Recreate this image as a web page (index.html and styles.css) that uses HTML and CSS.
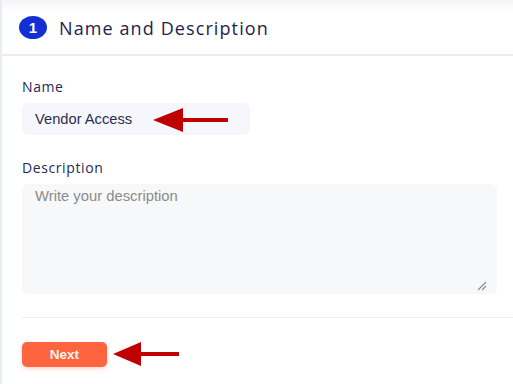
FILE: index.html
```html
<!DOCTYPE html>
<html>
<head>
<meta charset="utf-8">
<link rel="stylesheet" href="styles.css">
</head>
<body>
<div class="card">
  <div class="header">
    <span class="step">1</span>
    <span class="title">Name and Description</span>
  </div>
  <div class="content">
    <div class="field">
      <label class="label">Name</label>
      <div class="name-row">
        <div class="input">Vendor Access</div>
        <svg class="arrow arrow-name" width="80" height="26" viewBox="0 0 80 26">
          <polygon points="0,12 30,0 30,24" fill="#c00000"/>
          <rect x="28" y="10" width="47" height="4" fill="#c00000"/>
        </svg>
      </div>
    </div>
    <div class="field field-desc">
      <label class="label">Description</label>
      <div class="textarea">
        <span class="placeholder">Write your description</span>
        <svg class="grip" width="10" height="10" viewBox="0 0 10 10">
          <line x1="1" y1="9" x2="9" y2="1" stroke="#8a8a8a" stroke-width="1.1"/>
          <line x1="5" y1="9" x2="9" y2="5" stroke="#8a8a8a" stroke-width="1.1"/>
        </svg>
      </div>
    </div>
    <div class="divider"></div>
    <div class="actions">
      <button class="next">Next</button>
      <svg class="arrow arrow-next" width="70" height="26" viewBox="0 0 70 26">
        <polygon points="0,12 28,0 28,24" fill="#c00000"/>
        <rect x="26" y="10" width="40" height="4" fill="#c00000"/>
      </svg>
    </div>
  </div>
</div>
</body>
</html>
```
FILE: styles.css
```css
* { box-sizing: border-box; }
html, body { margin: 0; padding: 0; background: #ffffff; }
body { width: 513px; height: 384px; overflow: hidden; }

.card {
  height: 384px;
  border-left: 2px solid #e8ecf3;
  background: linear-gradient(to bottom, #f3f4f7 0px, #ffffff 12px);
}

.header {
  height: 56px;
  display: flex;
  align-items: center;
  padding-left: 17px;
  gap: 12px;
  border-bottom: 2px solid #e9ecf3;
}

.step {
  width: 28px;
  height: 23px;
  border-radius: 50%;
  background: #1330d6;
  color: #ffffff;
  font-family: "Liberation Sans", Arial, sans-serif;
  font-weight: bold;
  font-size: 15px;
  display: flex;
  align-items: center;
  justify-content: center;
  margin-top: 1px;
}

.title {
  font-family: "Open Sans", sans-serif;
  font-size: 18px;
  font-weight: 500;
  letter-spacing: 1.1px;
  color: #1f2250;
  margin-top: 2px;
}

.content {
  padding: 21px 16px 0 20px;
}

.label {
  display: block;
  font-family: "Open Sans", sans-serif;
  font-size: 14px;
  font-weight: 500;
  line-height: 20px;
  letter-spacing: 0.6px;
  color: #262a55;
  margin-bottom: 6px;
}

.name-row {
  position: relative;
}

.input {
  width: 228px;
  height: 32px;
  border-radius: 6px;
  background: #f6f7fc;
  padding-left: 13px;
  display: flex;
  align-items: center;
  font-family: "Liberation Sans", Arial, sans-serif;
  font-size: 14.7px;
  color: #2b2f4f;
}

.arrow { position: absolute; }
.arrow-name { left: 131px; top: 5px; }

.field-desc { margin-top: 23px; }

.textarea {
  position: relative;
  height: 110px;
  border-radius: 6px;
  background: #f7f8fa;
  padding: 3px 13px;
  font-family: "Liberation Sans", Arial, sans-serif;
  font-size: 14.8px;
  line-height: 18px;
  color: #8b8b8b;
}

.grip { position: absolute; right: 10px; bottom: 3px; }

.divider {
  margin-top: 23px;
  margin-right: -16px;
  height: 1px;
  background: #eceef2;
}

.actions {
  position: relative;
  margin-top: 24px;
}

.next {
  width: 85px;
  height: 25px;
  border: none;
  border-radius: 5px;
  background: #ff6441;
  color: #fff3f0;
  font-family: "Liberation Sans", Arial, sans-serif;
  font-weight: bold;
  font-size: 13.5px;
  box-shadow: 0 2px 4px rgba(255, 100, 65, 0.25);
  padding: 0;
}

.arrow-next { left: 91px; top: 0px; }
```
